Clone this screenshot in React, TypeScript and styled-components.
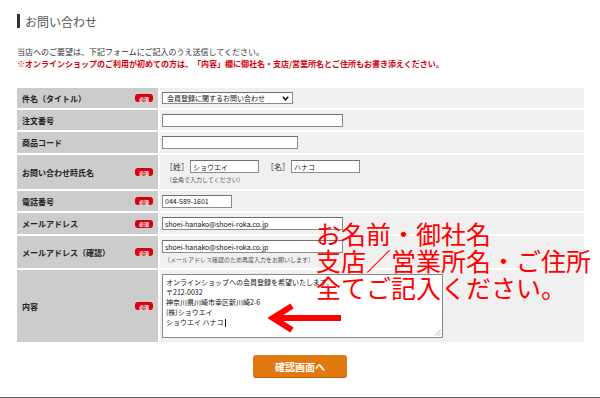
import React from 'react';
import styled, { createGlobalStyle } from 'styled-components';

const GlobalStyle = createGlobalStyle`
  body {
    margin: 0;
    background: #ffffff;
    font-family: "Noto Sans CJK JP", "Noto Sans", sans-serif;
  }
`;

export const Page = styled.div`
  position: relative;
  width: 600px;
  height: 398px;
  box-sizing: border-box;
  padding: 14px 16px 0 17px;
  overflow: hidden;
`;

export const Heading = styled.h1`
  display: flex;
  align-items: center;
  height: 14px;
  margin: 0;
  padding-left: 5px;
  border-left: 3px solid #333333;
  font-size: 12px;
  font-weight: normal;
  color: #555555;
`;

export const Intro = styled.p<{ $alert?: boolean }>`
  margin: 0;
  height: 12px;
  line-height: 12px;
  font-size: 8px;
  font-weight: ${(p) => (p.$alert ? 'bold' : 'normal')};
  color: ${(p) => (p.$alert ? '#d4000f' : '#333333')};
  white-space: nowrap;
`;

export const IntroBlock = styled.div`
  margin-top: 18px;
`;

export const FormTable = styled.div`
  display: grid;
  grid-template-columns: 141px 1fr;
  column-gap: 2px;
  row-gap: 2px;
  margin-top: 18px;
`;

export const LabelCell = styled.div<{ $h: number }>`
  display: flex;
  align-items: center;
  justify-content: space-between;
  height: ${(p) => p.$h}px;
  padding: 0 5px;
  background: #cccccc;
  font-size: 8px;
  font-weight: bold;
  color: #222222;
`;

export const ValueCell = styled.div<{ $h: number }>`
  display: flex;
  flex-direction: column;
  justify-content: center;
  height: ${(p) => p.$h}px;
  padding-left: 2px;
  background: #f0f0f0;
`;

export const Badge = styled.span`
  display: inline-flex;
  align-items: center;
  justify-content: center;
  width: 18px;
  height: 8px;
  border-radius: 3px;
  background: #d7000f;
  color: #ffffff;
  font-size: 5px;
  font-weight: bold;
  line-height: 1;
`;

export const TextBox = styled.div<{ $w: number }>`
  display: flex;
  align-items: center;
  width: ${(p) => p.$w}px;
  height: 13px;
  box-sizing: border-box;
  padding-left: 2px;
  border: 1px solid #8a8a8a;
  border-top-color: #6f6f6f;
  background: #ffffff;
  font-size: 7px;
  color: #111111;
  white-space: nowrap;
  overflow: hidden;
`;

export const SelectBox = styled(TextBox)`
  justify-content: space-between;
  padding: 0 3px 0 4px;
  height: 12px;
  font-size: 7px;
`;

export const NameRow = styled.div`
  display: flex;
  align-items: center;
  gap: 7px;
  padding-left: 3px;
  font-size: 8px;
  color: #333333;
`;

export const NamePart = styled.span`
  display: flex;
  align-items: center;
  gap: 1px;
`;

export const Note = styled.div<{ $indent: number }>`
  margin-top: 2px;
  padding-left: ${(p) => p.$indent}px;
  font-size: 6px;
  color: #555555;
  white-space: nowrap;
`;

export const TextArea = styled.div`
  position: relative;
  width: 281px;
  height: 64px;
  box-sizing: border-box;
  padding: 2px 3px;
  border: 1px solid #8a8a8a;
  background: #ffffff;
  font-size: 7px;
  line-height: 10px;
  color: #111111;
  white-space: nowrap;
`;

export const Grip = styled.svg`
  position: absolute;
  right: 1px;
  bottom: 1px;
`;

export const Caret = styled.span`
  display: inline-block;
  width: 1px;
  height: 8px;
  margin-left: 1px;
  vertical-align: middle;
  background: #111111;
`;

export const ButtonRow = styled.div`
  display: flex;
  justify-content: center;
  margin: 13px -16px 0 -17px;
`;

export const SubmitButton = styled.button`
  width: 94px;
  height: 23px;
  border: none;
  border-bottom: 1px solid #b85f05;
  border-radius: 3px;
  background: #e27810;
  color: #ffffff;
  font-family: "Noto Sans CJK JP", sans-serif;
  font-size: 10px;
  font-weight: bold;
`;

export const BottomLine = styled.div`
  position: absolute;
  left: 0;
  right: 0;
  bottom: 0;
  height: 1px;
  background: #666666;
`;

export const Annotation = styled.div`
  position: absolute;
  left: 316px;
  top: 220px;
  font-size: 25px;
  line-height: 27px;
  color: #ff0000;
  white-space: nowrap;
`;

export const Arrow = styled.svg`
  position: absolute;
  left: 268px;
  top: 303px;
`;

const App = () => (
  <>
    <GlobalStyle />
    <Page>
      <Heading>お問い合わせ</Heading>
      <IntroBlock>
        <Intro>当店へのご要望は、下記フォームにご記入のうえ送信してください。</Intro>
        <Intro $alert>
          ※オンラインショップのご利用が初めての方は、「内容」欄に御社名・支店/営業所名とご住所もお書き添えください。
        </Intro>
      </IntroBlock>

      <FormTable>
        <LabelCell $h={20}>
          件名（タイトル）<Badge>必須</Badge>
        </LabelCell>
        <ValueCell $h={20}>
          <SelectBox $w={131}>
            会員登録に関するお問い合わせ
            <svg width="7" height="5" viewBox="0 0 7 5">
              <polyline points="0.8,0.8 3.5,3.8 6.2,0.8" fill="none" stroke="#111" strokeWidth="1.5" />
            </svg>
          </SelectBox>
        </ValueCell>

        <LabelCell $h={20}>注文番号</LabelCell>
        <ValueCell $h={20}>
          <TextBox $w={181} />
        </ValueCell>

        <LabelCell $h={21}>商品コード</LabelCell>
        <ValueCell $h={21}>
          <TextBox $w={136} />
        </ValueCell>

        <LabelCell $h={34}>
          お問い合わせ時氏名<Badge>必須</Badge>
        </LabelCell>
        <ValueCell $h={34}>
          <NameRow>
            <NamePart>
              ［姓］<TextBox $w={69}>ショウエイ</TextBox>
            </NamePart>
            <NamePart>
              ［名］<TextBox $w={69}>ハナコ</TextBox>
            </NamePart>
          </NameRow>
          <Note $indent={4}>（全角で入力してください）</Note>
        </ValueCell>

        <LabelCell $h={20}>
          電話番号<Badge>必須</Badge>
        </LabelCell>
        <ValueCell $h={20}>
          <TextBox $w={70}>044-589-1601</TextBox>
        </ValueCell>

        <LabelCell $h={21}>
          メールアドレス<Badge>必須</Badge>
        </LabelCell>
        <ValueCell $h={21}>
          <TextBox $w={181}>shoei-hanako@shoei-roka.co.jp</TextBox>
        </ValueCell>

        <LabelCell $h={32}>
          メールアドレス（確認）<Badge>必須</Badge>
        </LabelCell>
        <ValueCell $h={32}>
          <TextBox $w={181}>shoei-hanako@shoei-roka.co.jp</TextBox>
          <Note $indent={2}>（メールアドレス確認のため再度入力をお願いします）</Note>
        </ValueCell>

        <LabelCell $h={72}>
          内容<Badge>必須</Badge>
        </LabelCell>
        <ValueCell $h={72}>
          <TextArea>
            オンラインショップへの会員登録を希望いたします。
            <br />
            〒212-0032
            <br />
            神奈川県川崎市幸区新川崎2-6
            <br />
            (株)ショウエイ
            <br />
            ショウエイ ハナコ<Caret />
            <Grip width="7" height="7" viewBox="0 0 7 7">
              <line x1="1" y1="6.5" x2="6.5" y2="1" stroke="#999" strokeWidth="0.8" />
              <line x1="4" y1="6.5" x2="6.5" y2="4" stroke="#999" strokeWidth="0.8" />
            </Grip>
          </TextArea>
        </ValueCell>
      </FormTable>

      <ButtonRow>
        <SubmitButton>確認画面へ</SubmitButton>
      </ButtonRow>

      <Annotation>
        お名前・御社名
        <br />
        支店／営業所名・ご住所
        <br />
        全てご記入ください。
      </Annotation>

      <Arrow width="74" height="30" viewBox="0 0 74 30">
        <line x1="8" y1="15" x2="73" y2="15" stroke="#ff0000" strokeWidth="6" />
        <polyline points="24,3 5,15 24,27" fill="none" stroke="#ff0000" strokeWidth="6" strokeLinejoin="miter" />
      </Arrow>

      <BottomLine />
    </Page>
  </>
);

export default App;
